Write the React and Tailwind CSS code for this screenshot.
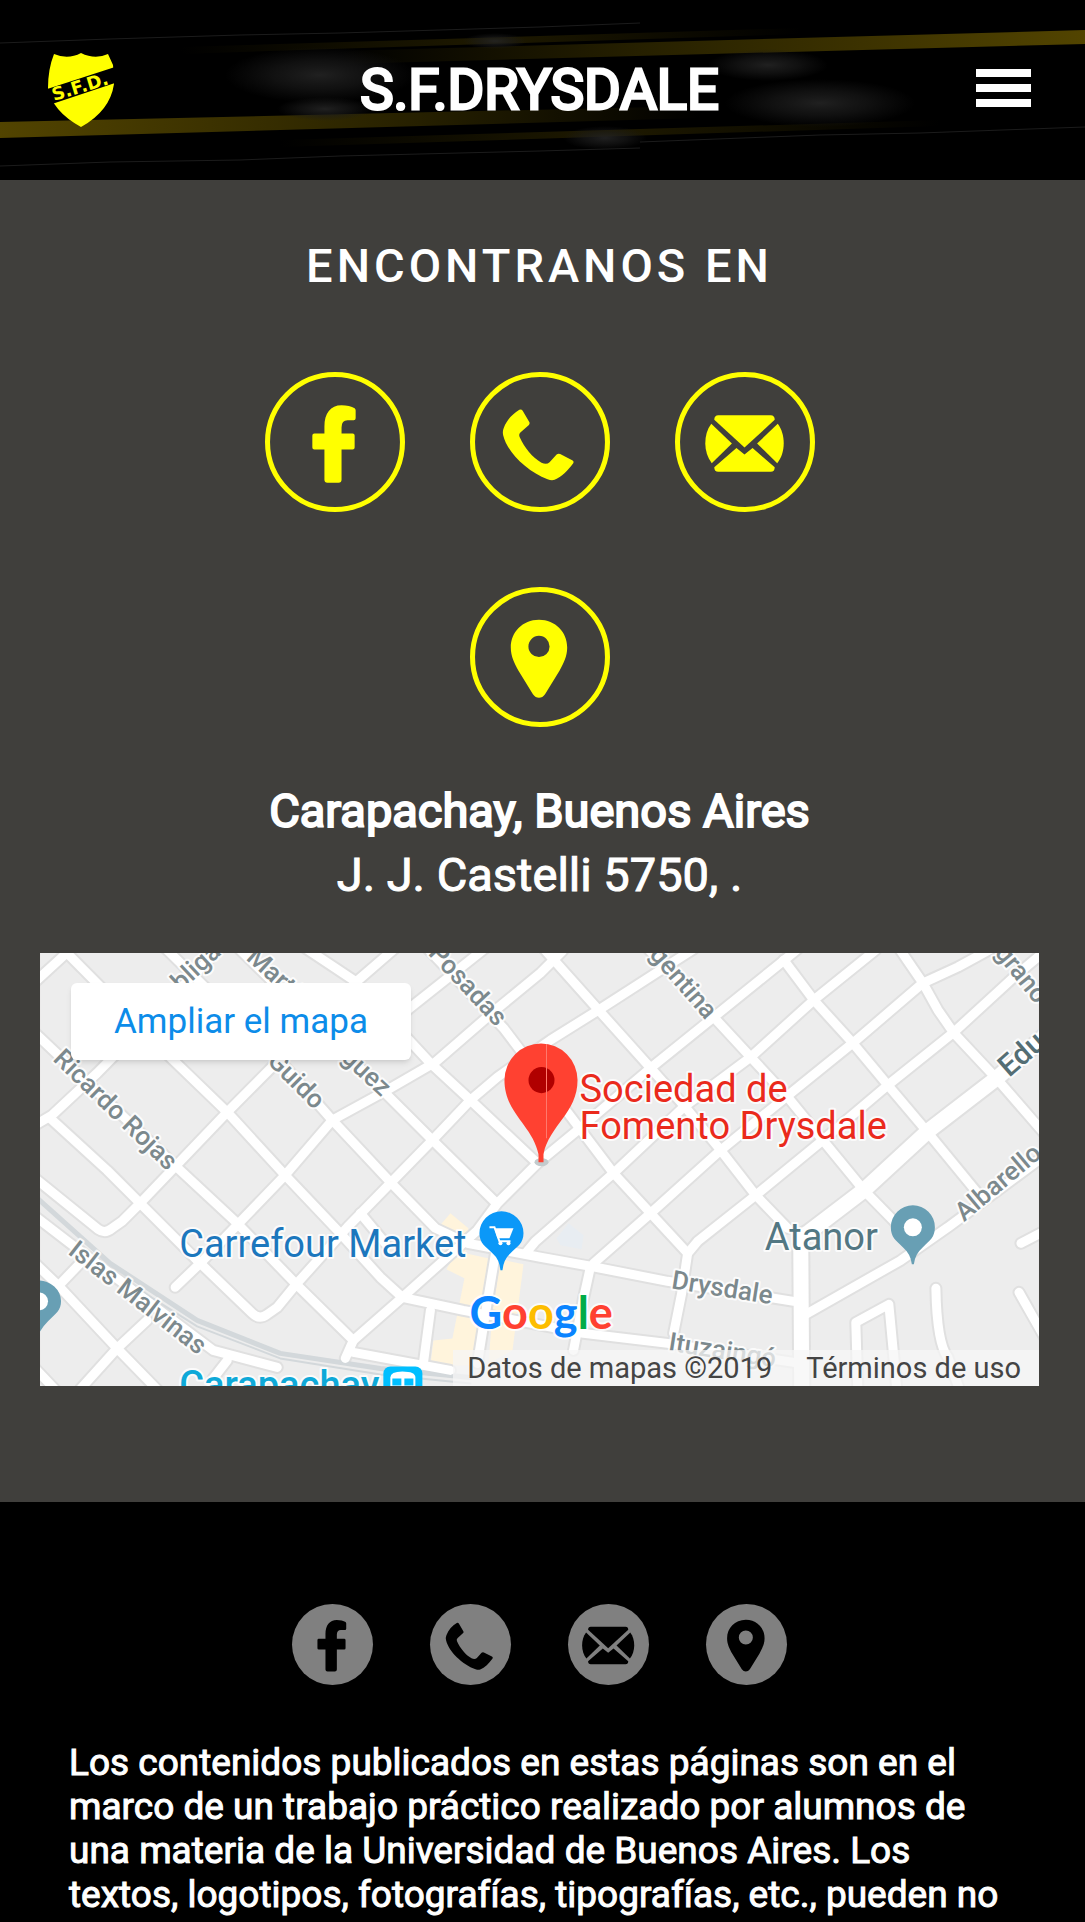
import React from "react";

function FacebookGlyph() {
  return (
    <path d="M59 107V77H49Q47 77 47 75V63Q47 61 49 61H59V54C59 41 65 33 76 33C81 33 86 34 89 36Q90 37 90 38V46Q90 48 88 48H82Q76 48 76 55V61H87Q89 61 89 63V75Q89 77 87 77H76V107Q76 110 73 110H62Q59 110 59 107Z" />
  );
}

function PhoneGlyph() {
  return (
    <path d="M49 37.5Q51 36.500 52.300 38.500L59 50Q59.500 51.500 58.500 52.500L50 60Q48 62 49.500 65C54 75 62 85 71 90Q76 92.500 79 89.500L86 82Q87.500 80.500 89.500 81.500L101.500 87.500Q103.500 88.500 102.500 90.500C97 98 91 104 84 107Q81 108 77 106.500C57 99 37 80 33 63Q32 59 33.500 55.500C37 47 42 42 49 37.500Z" />
  );
}

function MailGlyph() {
  return (
    <g>
      <path d="M39 47.500Q39 43 43 43H95Q99 43 99 47.500L69 75Z" />
      <path d="M36 51.500L56.500 71L36.500 90.500C28 80 28 62 36 51.500Z" />
      <path d="M102 51.500L81.500 71L101.500 90.500C110 80 110 62 102 51.500Z" />
      <path d="M61 75.500L69 82L77 75.500L99 94.500Q99 99 95 99H43Q39 99 39 94.500Z" />
    </g>
  );
}

function PinGlyph() {
  return (
    <path
      fillRule="evenodd"
      d="M68.500 32.500C52 32.500 40.500 45 40.500 60C40.500 69 44 75 48 83L62.500 106.500Q65 110 68.500 110Q72 110 74.500 106.500L89 83C93 75 96.500 69 96.500 60C96.500 45 85 32.500 68.500 32.500ZM68.500 48.500A10.500 10.500 0 1 1 68.500 69.500A10.500 10.500 0 1 1 68.500 48.500Z"
    />
  );
}

const contacts = [
  { name: "Facebook", href: "#facebook", Glyph: FacebookGlyph },
  { name: "Teléfono", href: "#telefono", Glyph: PhoneGlyph },
  { name: "Correo", href: "#correo", Glyph: MailGlyph },
  { name: "Ubicación", href: "#ubicacion", Glyph: PinGlyph },
];

function Shield() {
  return (
    <svg viewBox="0 0 68 78" className="h-[78px] w-[68px]" aria-hidden="true">
      <path
        fill="#ffff00"
        d="M6 3Q20 9 33 2Q47 9 60 3L65 14Q66 24 66 33Q62 60 33 76Q4 60 0 37Q0 18 6 3Z"
      />
      <path fill="#000" d="M-1 38L67 16V32L4 53Z" />
      <text
        x="6"
        y="50"
        transform="rotate(-17 6 50)"
        className="fill-[#ffff00] font-['DejaVu_Sans'] text-[18px] font-bold"
      >
        S.F.D.
      </text>
    </svg>
  );
}

function HeaderBackdrop() {
  return (
    <svg
      viewBox="0 0 1085 180"
      preserveAspectRatio="none"
      className="absolute inset-0 h-full w-full"
      aria-hidden="true"
    >
      <defs>
        <linearGradient id="goldLeft" x1="0" x2="1">
          <stop offset="0" stopColor="#524400" />
          <stop offset="0.6" stopColor="#262000" />
          <stop offset="1" stopColor="#000" />
        </linearGradient>
        <linearGradient id="goldRight" x1="0" x2="1">
          <stop offset="0" stopColor="#000" />
          <stop offset="0.4" stopColor="#262000" />
          <stop offset="1" stopColor="#524400" />
        </linearGradient>
        <linearGradient id="goldMid" x1="0" x2="1">
          <stop offset="0" stopColor="#000" />
          <stop offset="0.5" stopColor="#1f1a00" />
          <stop offset="1" stopColor="#000" />
        </linearGradient>
        <radialGradient id="mist">
          <stop offset="0" stopColor="#242424" stopOpacity="0.9" />
          <stop offset="0.5" stopColor="#1c1c1c" stopOpacity="0.6" />
          <stop offset="1" stopColor="#1a1a1a" stopOpacity="0" />
        </radialGradient>
      </defs>
      <rect width="1085" height="180" fill="#000" />
      <path fill="url(#goldLeft)" d="M0 122L700 106V118L0 138Z" />
      <path fill="url(#goldRight)" d="M340 51L1085 30V44L340 64Z" />
      <path fill="url(#goldMid)" d="M180 47L800 28V34L180 54Z" />
      <path fill="url(#goldMid)" d="M280 140L940 120V126L280 147Z" />
      <g fill="none" stroke="#1c1c1c">
        <path d="M0 43L110 39L240 35L340 33L540 27L640 23" />
        <path d="M0 166L110 162L240 160L340 156L540 151L640 148" />
        <path d="M640 142L820 135L920 133L1085 127" />
      </g>
      <ellipse cx="320" cy="75" rx="95" ry="28" fill="url(#mist)" />
      <ellipse cx="325" cy="109" rx="48" ry="12" fill="url(#mist)" />
      <ellipse cx="495" cy="41" rx="32" ry="8" fill="url(#mist)" />
      <ellipse cx="768" cy="65" rx="60" ry="16" fill="url(#mist)" />
      <ellipse cx="820" cy="103" rx="95" ry="24" fill="url(#mist)" />
      <ellipse cx="605" cy="138" rx="42" ry="12" fill="url(#mist)" />
    </svg>
  );
}

const roads = [
  "M22 -5L133 107L187 159L243 220L300 280L340 324L362 344L423 357L460 364L543 380L627 390L753 409",
  "M265 -5L313 27L390 110L430 147L497 210",
  "M125 -5L240 108L292 167L353 232L395 275L427 290L500 304L550 313L627 328L753 348",
  "M195 -8L310 105L392 187L456 250",
  "M380 -12L463 75L520 150L573 220L647 300L641 340L633 380",
  "M500 -8L558 57L610 115L643 152L680 197L715 242L747 275",
  "M600 -12L673 64L710 104L747 144L782 187L823 237L870 285",
  "M743 7L773 47L812 90L847 132L885 177L940 244",
  "M858 -5L882 30L897 57L913 80L957 127L1003 180",
  "M-5 29L32 -5",
  "M-5 172L12 162L57 120L185 -10",
  "M-5 225L58 276Q65 281 72 275L82 268L100 250L187 159L318 27L355 -5",
  "M135 334L160 310L243 224L292 167L345 138L395 109L455 57L500 20L522 -2",
  "M345 75L372 53L445 -5",
  "M157 307L212 360Q219 367 227 361L237 354L255 332L307 274L392 187L430 147L457 124L510 87L558 57L617 19L653 -4",
  "M305 405L313 387L362 344L437 277L457 250L497 210L537 177L610 115L667 69L740 10L757 -4",
  "M485 300L495 288L573 220L643 154L710 104L773 47L835 -3",
  "M553 310L610 260L680 197L750 140L812 90L882 30L917 14L950 -4",
  "M647 300L657 288L715 242L782 187L847 132L912 80L973 24L1003 -1",
  "M10 165L67 217L100 250L160 310",
  "M-5 80L140 217L197 270L257 332L313 387",
  "M-5 263L30 290L173 397L237 414M313 399L410 417",
  "M-5 310L20 334L77 395L117 436M17 334L42 308M40 436L77 395L107 367M-5 415L15 436M173 425L187 407",
  "M320 260L345 290M390 357L383 410M455 300L445 360L437 410",
  "M550 313L543 345L533 397",
  "M765 361L860 307L907 274L1003 203",
  "M817 436L815 369L848 351L856 436M895 335Q896 390 907 404L920 440M978 339L1003 383M980 290L1003 278",
];

const avenue = "M761 440L760 290Q760 283 768 279L823 237L887 178L957 124L1005 82";

const streetLabels = [
  { text: "Ricardo Rojas", x: 12, y: 107, angle: 44 },
  { text: "Islas Malvinas", x: 27, y: 300, angle: 38 },
  { text: "obliga", x: 130, y: 49, angle: -43 },
  { text: "Martín", x: 205, y: 6, angle: 42 },
  { text: "guez", x: 300, y: 106, angle: 43 },
  { text: "Guido", x: 226, y: 109, angle: 45 },
  { text: "Posadas", x: 387, y: 1, angle: 47 },
  { text: "gentina", x: 608, y: 2, angle: 49 },
  { text: "grano", x: 953, y: 0, angle: 51 },
  { text: "Albarello", x: 923, y: 269, angle: -40 },
  { text: "Drysdale", x: 630, y: 335, angle: 9 },
  { text: "Ituzaingó", x: 627, y: 397, angle: 9 },
];

const HALO = "stroke-white/80 stroke-[4px] [paint-order:stroke] [stroke-linejoin:round]";

function MapDrawing() {
  return (
    <svg
      viewBox="0 0 998 433"
      className="block h-auto w-full font-['Roboto',sans-serif]"
      role="img"
      aria-label="Mapa de Carapachay"
    >
      <rect width="998" height="433" fill="#ededed" />
      <g fill="#fff4dc">
        <path d="M398 274L410 260L428 275L425 300L452 306L448 340L440 397L436 412H390L393 387L412 385L424 325L406 316L414 302Z" />
        <path d="M460 306L483 311L472 397L448 410L452 360Z" />
      </g>
      <path fill="#e8edf2" d="M516 285L528 270L543 282L541 296L520 292Z" />
      <g fill="none" strokeLinecap="round" strokeLinejoin="round">
        {roads.map((d) => (
          <path key={d} d={d} stroke="#e0e0e0" strokeWidth="13" />
        ))}
        <path d={avenue} stroke="#e0e0e0" strokeWidth="19" />
        <path d="M-5 243L70 310L157 367L240 400L340 415L430 424" stroke="#d3d8db" strokeWidth="5" />
        <path d="M70 318L157 373L240 405L340 421L430 430" stroke="#d3d8db" strokeWidth="2" />
        {roads.map((d) => (
          <path key={d} d={d} stroke="#fff" strokeWidth="9" />
        ))}
        <path d={avenue} stroke="#fff" strokeWidth="15" />
      </g>

      <g className={`fill-[#7c898d] text-[26px] font-medium ${HALO}`}>
        {streetLabels.map((s) => (
          <text key={s.text} x={s.x} y={s.y} transform={`rotate(${s.angle} ${s.x} ${s.y})`}>
            {s.text}
          </text>
        ))}
      </g>
      <text
        x="968"
        y="125"
        transform="rotate(-41 968 125)"
        className={`fill-[#546e74] text-[30px] font-medium ${HALO}`}
      >
        Edua
      </text>

      <g className={`text-[38px] ${HALO}`}>
        <text x="539" y="149" className="fill-[#ea2a1c]">Sociedad de</text>
        <text x="539" y="186" className="fill-[#ea2a1c]">Fomento Drysdale</text>
        <text x="139" y="304" className="fill-[#1c77bd]">Carrefour Market</text>
        <text x="724" y="297" className="fill-[#527783]">Atanor</text>
        <text x="139" y="445" className="fill-[#0fa9d8] font-medium">Carapachay</text>
      </g>

      <rect x="343" y="413" width="39" height="40" rx="7" fill="#00bfff" />
      <path d="M350 433V424Q350 418 362 418Q375 418 375 424V433Z" fill="#fff" />
      <path d="M352 425H361V432H352ZM364 425H373V432H364Z" fill="#00bfff" />

      <ellipse cx="501" cy="209" rx="7" ry="4" fill="#c3cbcd" />
      <path fill="#ff4131" d="M498 209V201C492 172 464 160 464 127A36.500 36.500 0 0 1 537 127C537 160 509 172 503 201V209Z" />
      <circle cx="501" cy="127" r="13" fill="#b00000" />
      <path d="M506 91V185" stroke="#ff7a6e" strokeWidth="1" />

      <path fill="#0b98f8" d="M460 317Q459 306 452 300C445 293 439 290 439 280A22 22 0 0 1 483 280C483 290 477 293 470 300Q463 306 462 317Z" />
      <path d="M449 274H454L459 288H470" fill="none" stroke="#fff" strokeWidth="2" />
      <path d="M454 275H473L469 285H457Z" fill="#fff" />
      <circle cx="460" cy="290" r="2" fill="#fff" />
      <circle cx="468" cy="290" r="2" fill="#fff" />

      <path fill="#689fb4" d="M871 311Q870 301 862 294C855 287 850 284 850 274A22 22 0 0 1 894 274C894 284 889 287 882 294Q874 301 873 311Z" />
      <circle cx="872" cy="274" r="9" fill="#fff" />
      <path fill="#689fb4" d="M-2 383Q0 376 8 368C16 360 21 357 21 348A23 21 0 0 0 -2 327Z" />
      <circle cx="-1" cy="348" r="9" fill="#fff" />

      <text x="429" y="376" className={`font-['Lato',sans-serif] text-[45px] font-bold ${HALO}`}>
        <tspan fill="#0a84ff">G</tspan>
        <tspan fill="#ff4131">o</tspan>
        <tspan fill="#fdbd00">o</tspan>
        <tspan fill="#0a84ff">g</tspan>
        <tspan fill="#00ac47">l</tspan>
        <tspan fill="#ff4131">e</tspan>
      </text>
    </svg>
  );
}

function Header() {
  return (
    <header className="relative bg-black">
      <HeaderBackdrop />
      <div className="relative grid h-[180px] grid-cols-[1fr_auto_1fr] items-center pr-[54px] pl-12">
        <a href="#inicio" aria-label="Inicio" className="justify-self-start">
          <Shield />
        </a>
        <h1 className="text-[56px] leading-[64px] font-normal [-webkit-text-stroke:3px_white]">
          S.F.DRYSDALE
        </h1>
        <button
          type="button"
          aria-label="Abrir menú"
          className="mb-1 flex w-[55px] flex-col gap-[7px] justify-self-end"
        >
          <span className="h-2 bg-white" />
          <span className="h-2 bg-white" />
          <span className="h-2 bg-white" />
        </button>
      </div>
    </header>
  );
}

export default function App() {
  return (
    <div className="min-h-screen bg-black font-['Roboto',sans-serif] text-white">
      <Header />

      <main className="bg-[#403f3c] pt-[58px] pr-[46px] pb-[116px] pl-10 text-center">
        <h2 className="text-[47px] leading-[56px] font-medium tracking-[4px]">ENCONTRANOS EN</h2>

        <nav
          aria-label="Contacto"
          className="mx-auto mt-[78px] flex max-w-[560px] flex-wrap justify-center gap-x-[65px] gap-y-[75px]"
        >
          {contacts.map(({ name, href, Glyph }) => (
            <a
              key={name}
              href={href}
              aria-label={name}
              className="size-[140px] rounded-full text-[#ffff00]"
            >
              <svg viewBox="0 0 139 139" className="size-full" fill="currentColor" aria-hidden="true">
                <circle cx="69.500" cy="69.500" r="67" fill="none" stroke="currentColor" strokeWidth="5" />
                <Glyph />
              </svg>
            </a>
          ))}
        </nav>

        <address className="mt-[52px] text-[47px] leading-[64px] not-italic">
          <strong className="block font-normal [-webkit-text-stroke:2px_white]">
            Carapachay, Buenos Aires
          </strong>
          <span className="block [-webkit-text-stroke:1px_white]">J. J. Castelli 5750, .</span>
        </address>

        <div className="relative mt-[46px] overflow-hidden text-left">
          <MapDrawing />
          <a
            href="#mapa"
            className="absolute top-[30px] left-[31px] rounded-md bg-white px-[43px] py-[18px] text-[35px] leading-[41px] text-[#0c8ce9] shadow-md"
          >
            Ampliar el mapa
          </a>
          <div className="absolute right-0 bottom-0 flex gap-[34px] bg-[#f5f5f5]/75 pr-[18px] pl-[14px] text-[29px] leading-9 text-[#444]">
            <span>Datos de mapas ©2019</span>
            <a href="#terminos">Términos de uso</a>
          </div>
        </div>
      </main>

      <footer className="bg-black pt-[102px]">
        <nav aria-label="Redes" className="flex justify-center gap-[57px] pr-[7px]">
          {contacts.map(({ name, href, Glyph }) => (
            <a
              key={name}
              href={href}
              aria-label={name}
              className="size-[81px] rounded-full bg-[#808080] text-black"
            >
              <svg viewBox="9 9 121 121" className="size-full" fill="currentColor" aria-hidden="true">
                <Glyph />
              </svg>
            </a>
          ))}
        </nav>
        <p className="mt-14 px-[69px] text-[37px] leading-[44px] [-webkit-text-stroke:1px_white]">
          Los contenidos publicados en estas páginas son en el marco de un trabajo práctico
          realizado por alumnos de una materia de la Universidad de Buenos Aires. Los textos,
          logotipos, fotografías, tipografías, etc., pueden no
        </p>
      </footer>
    </div>
  );
}
